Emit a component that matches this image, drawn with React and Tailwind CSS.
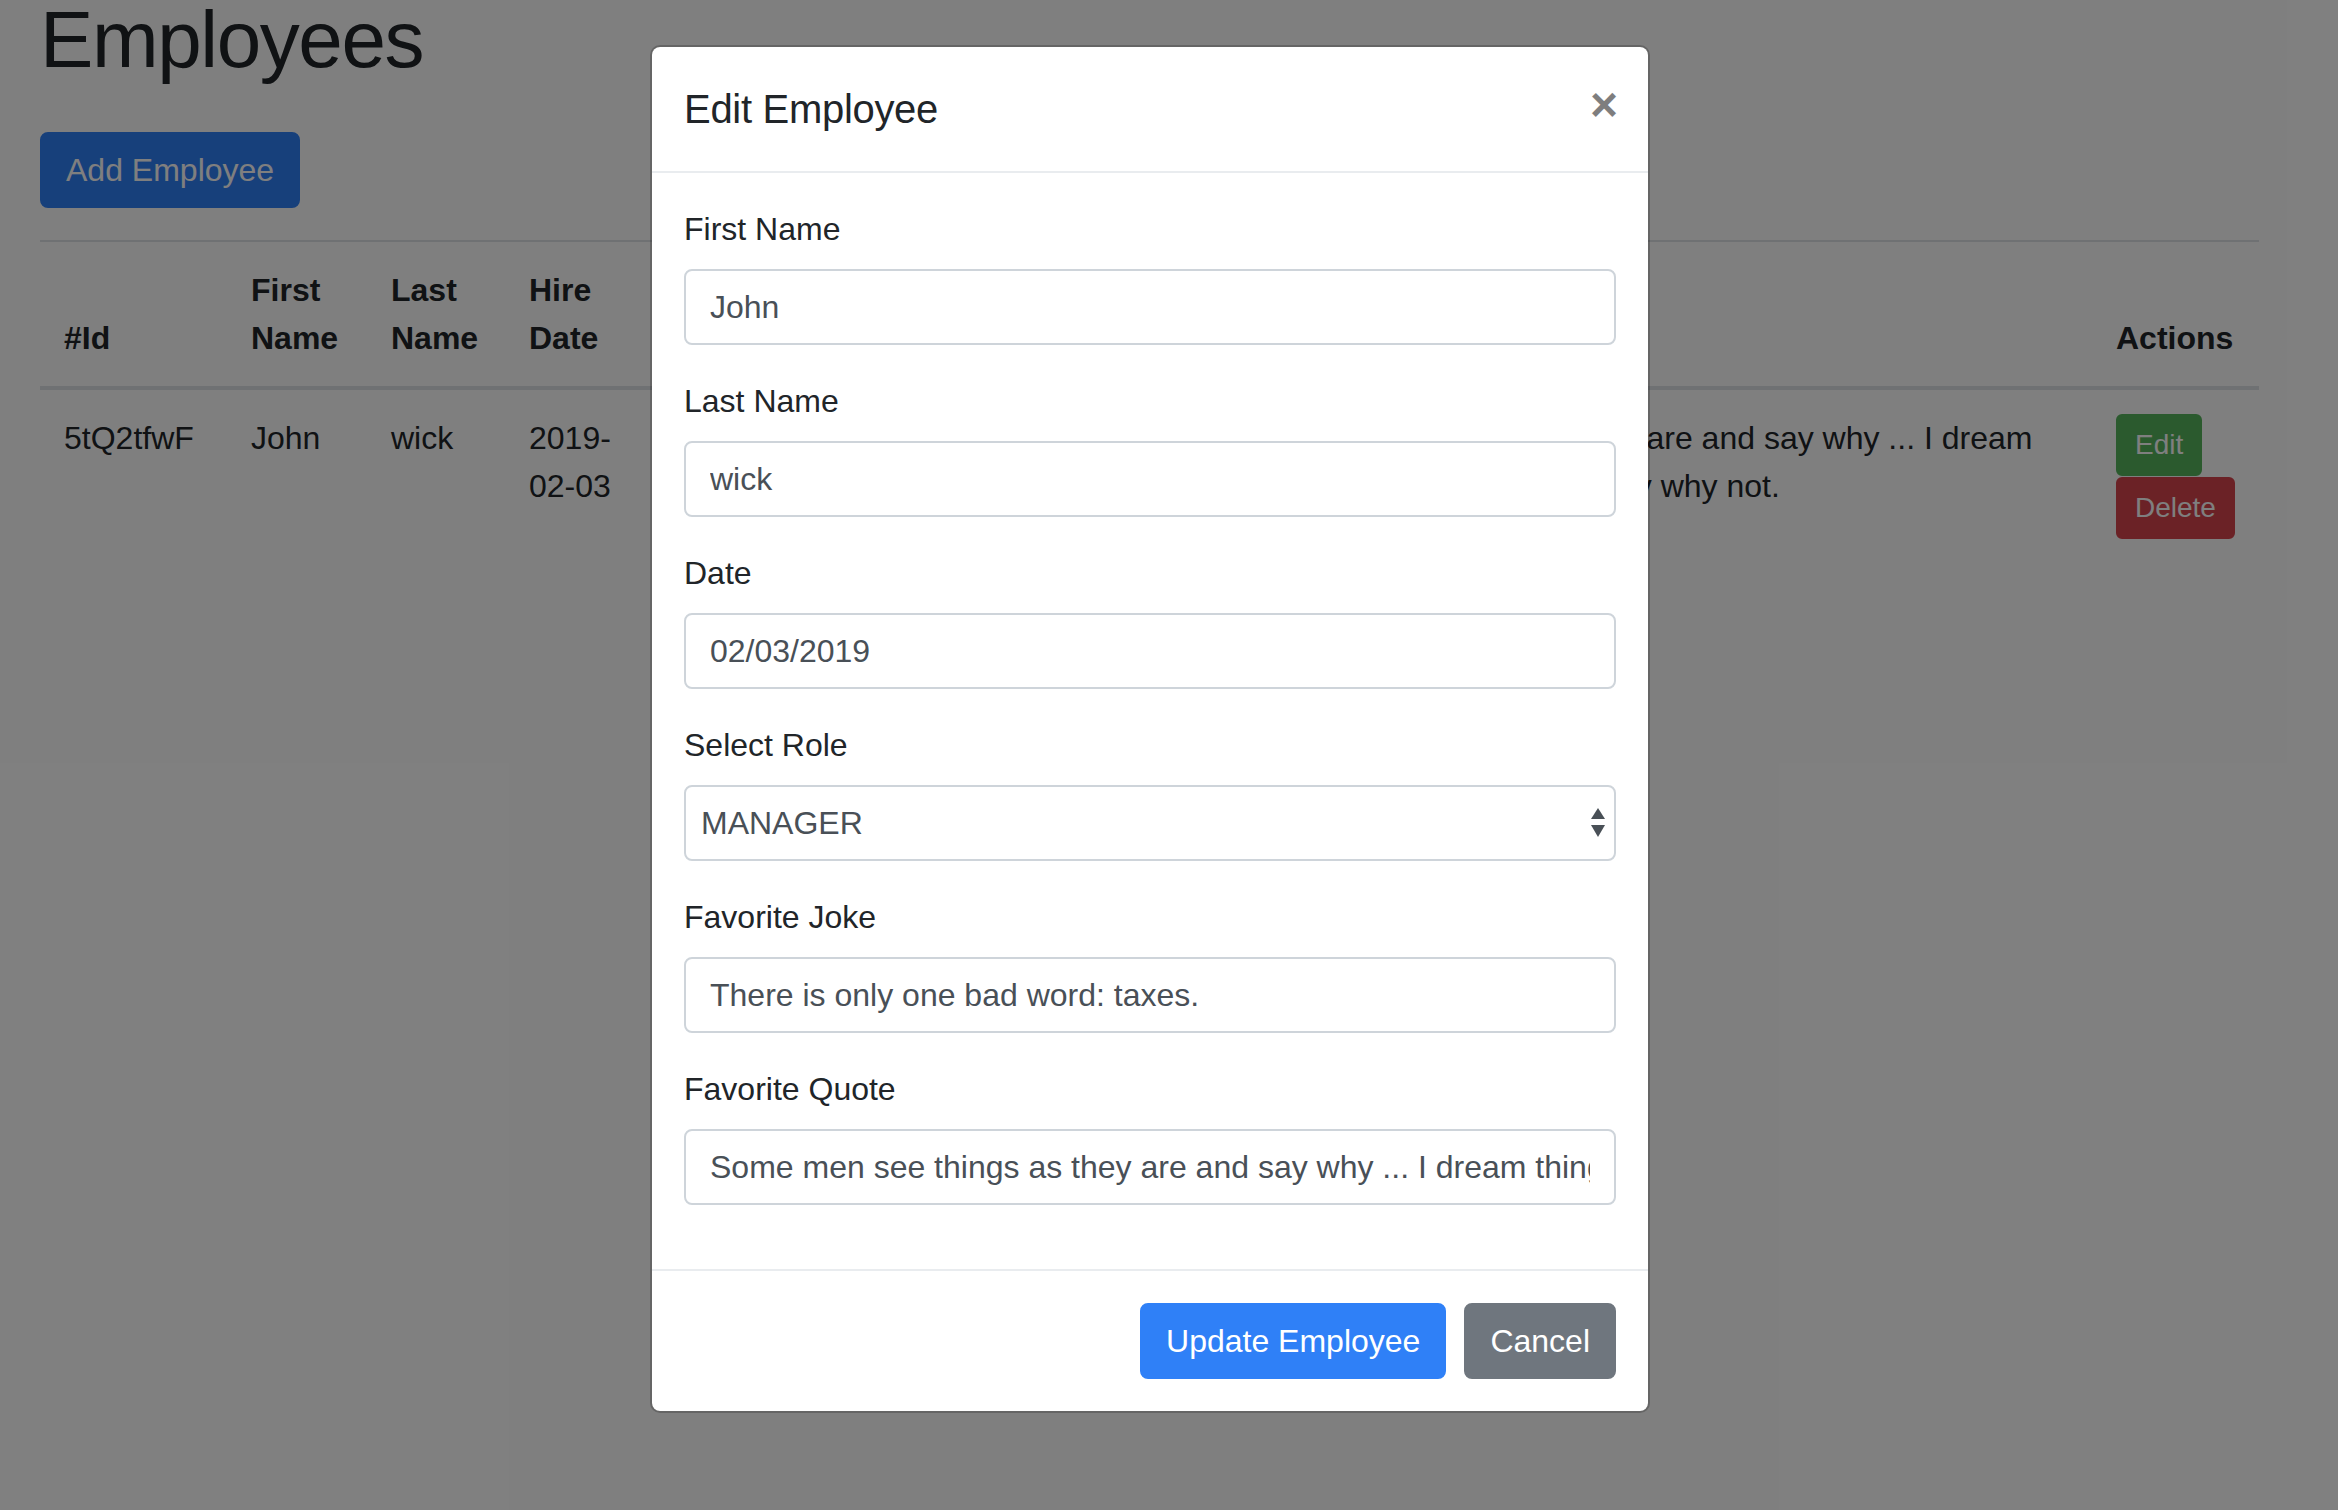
import { useState } from "react";

const employee = {
  id: "5tQ2tfwF",
  firstName: "John",
  lastName: "wick",
  hireDate: "2019-02-03",
  role: "MANAGER",
  joke: "There is only one bad word: taxes.",
  quote:
    "Some men see things as they are and say why ... I dream things that never were and say why not.",
};

const columns = [
  { title: "#Id", width: "w-[187px]" },
  { title: "First Name", width: "w-[140px]" },
  { title: "Last Name", width: "w-[138px]" },
  { title: "Hire Date", width: "w-[135px]" },
  { title: "Role", width: "w-[200px]" },
  { title: "Favorite Joke", width: "w-[352px]" },
  { title: "Favorite Quote", width: "w-[900px]" },
  { title: "Actions", width: "w-[167px]" },
];

const Field = ({ label, children }) => (
  <div className="mb-[32px]">
    <label className="block mb-[16px] text-[32px] leading-[48px] text-[#212529]">
      {label}
    </label>
    {children}
  </div>
);

const TextInput = ({ value }) => (
  <input
    type="text"
    readOnly
    defaultValue={value}
    className="block w-full h-[76px] px-[24px] py-[12px] rounded-[8px] border-2 border-[#ced4da] bg-white text-[32px] leading-[48px] text-[#495057] outline-none"
  />
);

const SelectArrows = () => (
  <svg width="16" height="30" viewBox="0 0 16 30" className="shrink-0">
    <polygon points="8,0 15,11 1,11" fill="#495057" />
    <polygon points="1,17 15,17 8,29" fill="#495057" />
  </svg>
);

const EditModal = () => {
  const [role] = useState(employee.role);

  return (
    <div className="absolute left-[650px] top-[45px] w-[1000px] rounded-[10px] border-2 border-black/20 bg-white bg-clip-padding">
      {/* header */}
      <div className="flex items-start justify-between p-[32px] border-b-2 border-[#e9ecef]">
        <h5 className="text-[40px] leading-[60px] font-medium tracking-[-0.3px] text-[#212529]">
          Edit Employee
        </h5>
        <button className="mt-[2px] -mr-[2px] text-[48px] leading-none font-bold text-black opacity-50">
          ×
        </button>
      </div>

      {/* body */}
      <div className="p-[32px] pb-0">
        <Field label="First Name">
          <TextInput value={employee.firstName} />
        </Field>
        <Field label="Last Name">
          <TextInput value={employee.lastName} />
        </Field>
        <Field label="Date">
          <TextInput value="02/03/2019" />
        </Field>
        <Field label="Select Role">
          <div className="flex items-center h-[76px] pl-[15px] pr-[8px] rounded-[8px] border-2 border-[#ced4da] bg-white text-[32px] leading-[48px] text-[#495057]">
            <span className="flex-1">{role}</span>
            <SelectArrows />
          </div>
        </Field>
        <Field label="Favorite Joke">
          <TextInput value={employee.joke} />
        </Field>
        <Field label="Favorite Quote">
          <TextInput value={employee.quote} />
        </Field>
      </div>
      <div className="h-[32px]" />

      {/* footer */}
      <div className="flex justify-end gap-[18px] p-[32px] border-t-2 border-[#e9ecef]">
        <button className="h-[76px] px-[24px] rounded-[8px] border-2 border-[#2f80f7] bg-[#2f80f7] text-[32px] leading-[48px] text-white">
          Update Employee
        </button>
        <button className="h-[76px] px-[24px] rounded-[8px] border-2 border-[#6f767e] bg-[#6f767e] text-[32px] leading-[48px] text-white">
          Cancel
        </button>
      </div>
    </div>
  );
};

export default function App() {
  return (
    <div className="relative h-[1510px] w-[2338px] overflow-hidden bg-white font-['Liberation_Sans',Arial,sans-serif] text-[#212529]">
      <div className="pl-[40px] pr-[79px]">
        <h1 className="-mt-[8px] mb-[44px] text-[80px] leading-[1.2] font-medium tracking-[-1.4px]">
          Employees
        </h1>
        <button className="h-[76px] px-[24px] rounded-[8px] border-2 border-[#2f80f7] bg-[#2f80f7] text-[32px] leading-[48px] text-white">
          Add Employee
        </button>

        {/* employees table */}
        <table className="mt-[32px] w-full table-fixed border-collapse text-[32px] leading-[48px]">
          <thead>
            <tr>
              {columns.map((col) => (
                <th
                  key={col.title}
                  className={`${col.width} p-[24px] align-bottom text-left font-bold border-t-2 border-b-4 border-[#dee2e6]`}
                >
                  {col.title}
                </th>
              ))}
            </tr>
          </thead>
          <tbody>
            <tr>
              <td className="p-[24px] align-top border-t-2 border-[#dee2e6]">{employee.id}</td>
              <td className="p-[24px] align-top border-t-2 border-[#dee2e6]">{employee.firstName}</td>
              <td className="p-[24px] align-top border-t-2 border-[#dee2e6]">{employee.lastName}</td>
              <td className="p-[24px] align-top border-t-2 border-[#dee2e6]">{employee.hireDate}</td>
              <td className="p-[24px] align-top border-t-2 border-[#dee2e6]">{employee.role}</td>
              <td className="p-[24px] align-top border-t-2 border-[#dee2e6]">{employee.joke}</td>
              <td className="p-[24px] align-top border-t-2 border-[#dee2e6]">{employee.quote}</td>
              <td className="p-[24px] align-top border-t-2 border-[#dee2e6]">
                <div className="flex flex-col items-start gap-[1px]">
                  <button className="h-[62px] px-[17px] rounded-[6px] border-2 border-[#56b45c] bg-[#56b45c] text-[28px] leading-[42px] text-white">
                    Edit
                  </button>
                  <button className="h-[62px] px-[17px] rounded-[6px] border-2 border-[#d6454d] bg-[#d6454d] text-[28px] leading-[42px] text-white">
                    Delete
                  </button>
                </div>
              </td>
            </tr>
          </tbody>
        </table>
      </div>

      {/* modal backdrop */}
      <div className="absolute inset-0 bg-black/50" />
      <EditModal />
    </div>
  );
}
